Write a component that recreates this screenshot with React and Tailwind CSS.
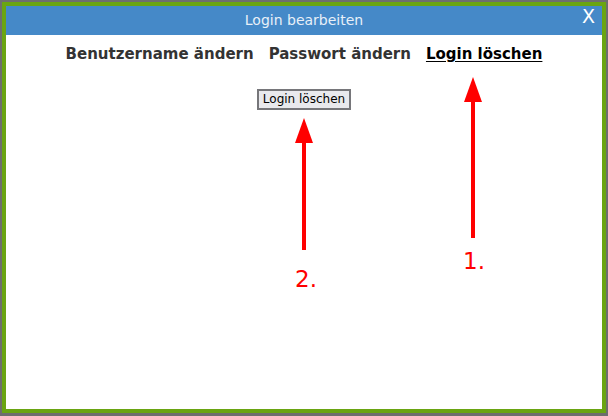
export default function App() {
  const tabs = [
    { label: "Benutzername ändern", active: false },
    { label: "Passwort ändern", active: false },
    { label: "Login löschen", active: true },
  ]

  return (
    <div className="w-[608px] h-[416px] bg-[#6e6e6e] p-[2px] pb-[3px] font-['DejaVu_Sans',sans-serif]">
      <div className="relative h-full border-4 border-[#6aa512] bg-white flex flex-col">
        {/* title bar */}
        <div className="h-[29px] bg-[#4589c8] flex items-center justify-center relative">
          <span className="text-[14px] text-[#e8f0f8]">Login bearbeiten</span>
          <span className="absolute right-[7px] top-[1px] text-[19px] text-white leading-none">X</span>
        </div>

        {/* tabs */}
        <div className="flex justify-center gap-[15px] pt-[8px] text-[15px] font-bold">
          {tabs.map((t, i) => (
            <span
              key={i}
              className={t.active ? "text-black underline underline-offset-2" : "text-[#333333]"}
            >
              {t.label}
            </span>
          ))}
        </div>

        <div className="flex justify-center pt-[23px]">
          <button className="h-[21px] px-[4px] text-[12px] text-black bg-[#e9e9ed] border-2 border-[#76767a] leading-none">
            Login löschen
          </button>
        </div>

        {/* annotations */}
        <Arrow left={458} top={71} length={161} />
        <span className="absolute left-[457px] top-[238px] text-[23px] text-[#ff0000]">1.</span>
        <Arrow left={289} top={112} length={132} />
        <span className="absolute left-[289px] top-[256px] text-[23px] text-[#ff0000]">2.</span>
      </div>
    </div>
  )
}

function Arrow({ left, top, length }) {
  return (
    <svg
      className="absolute"
      style={{ left, top }}
      width="18"
      height={length}
      viewBox={`0 0 18 ${length}`}
    >
      <polygon points="9,0 18,25 0,25" fill="#ff0000" />
      <rect x="7" y="24" width="4" height={length - 24} fill="#ff0000" />
    </svg>
  )
}
